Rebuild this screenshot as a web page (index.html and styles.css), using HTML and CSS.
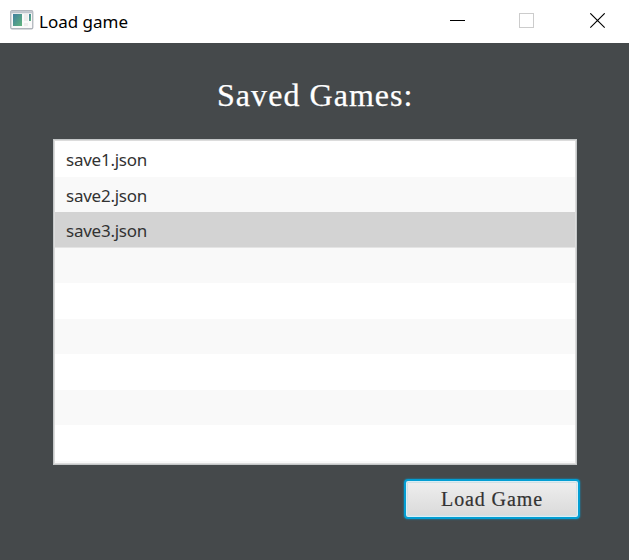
FILE: index.html
```html
<!DOCTYPE html>
<html lang="en">
<head>
<meta charset="utf-8">
<title>Load game</title>
<link rel="stylesheet" href="styles.css">
</head>
<body>
<div class="window">
  <header class="titlebar">
    <svg class="app-icon" width="24" height="20" viewBox="0 0 24 20">
      <defs><linearGradient id="pane" x1="0" y1="0" x2="1" y2="1"><stop offset="0" stop-color="#3f7fa0"/><stop offset="1" stop-color="#62b57d"/></linearGradient></defs>
      <rect x=".75" y=".75" width="22" height="18" rx="1.2" fill="#fafafa" stroke="#b0b5bc" stroke-width="1.3"/>
      <path d="M1 2.3H22.5" stroke="#bfc5cd" stroke-width="2"/>
      <rect x="3" y="4" width="9" height="12" fill="url(#pane)"/>
      <path d="M14 4h4v7h-4zM14 13h4v3h-4z" fill="#ededed"/>
      <rect x="19" y="4" width="2" height="7" fill="url(#pane)"/>
    </svg>
    <h1 class="caption">Load game</h1>
    <svg class="controls" width="156" height="16" viewBox="0 0 156 16">
      <path d="M0 7.5H15" stroke="#000"/>
      <rect x="69.5" y=".5" width="14" height="14" fill="none" stroke="#ccc"/>
      <path d="M140.3.3l14.4 14.4M154.7.3L140.3 14.7" stroke="#000" stroke-width="1.1"/>
    </svg>
  </header>
  <main class="content">
    <h2 class="heading">Saved Games:</h2>
    <ul class="list">
      <li>save1.json</li>
      <li>save2.json</li>
      <li class="selected">save3.json</li>
      <li></li><li></li><li></li><li></li><li></li><li></li><li></li>
    </ul>
    <button class="load" type="button">Load Game</button>
  </main>
</div>
</body>
</html>
```
FILE: styles.css
```css
* { box-sizing: border-box; }
body { margin: 0; background: #45494b; }
.window { width: 629px; height: 560px; overflow: hidden; display: flex; flex-direction: column; }
.titlebar {
  height: 43px; flex: none; display: flex; align-items: flex-start;
  background: #fff; padding: 0 23px 0 10px;
}
.app-icon { margin-top: 10px; }
.caption {
  margin: 9px 0 0 5px; font: 400 17px/26px "Noto Sans", sans-serif;
  letter-spacing: 0; color: #000;
}
.controls { margin: 13px 0 0 auto; }
.content {
  flex: 1; display: flex; flex-direction: column; background: #45494b;
  padding: 32px 49px 0 53px;
}
.heading {
  margin: 0 0 24px; height: 40px; padding-left: 164px; color: #fff;
  font: 400 32px/40px "Liberation Serif", serif; letter-spacing: 1.05px; white-space: nowrap;
  -webkit-text-stroke: .25px #fff;
}
.list {
  list-style: none; margin: 0; padding: 0; width: 524px; height: 326px; overflow: hidden;
  background: #fff; border: 1px solid #c4c7c8; box-shadow: inset 0 0 0 1px #dcdcdc;
  padding: 1px;
}
.list li {
  height: 35.5px; padding-left: 11px; color: #323232;
  font: 400 17px/38px "Noto Sans", sans-serif; letter-spacing: -.25px;
}
.list li:nth-child(even) { background: #f9f9f9; }
.list li:last-child { height: 2.5px; }
.list .selected { background: #d3d3d3; box-shadow: inset 0 -1px #e4e4e4; }
.load {
  align-self: flex-end; width: 176px; height: 40px; margin-top: 14px; padding: 0;
  border: 2px solid #039ed3; border-radius: 4px; color: #333;
  background: linear-gradient(#efefef, #d9d9d9);
  box-shadow: 0 0 2px #039ed3, inset 0 0 0 1px #d9eef5, inset 0 0 0 2px #d2e0e5;
  font: 400 20px/36px "Liberation Serif", serif; letter-spacing: .9px;
  -webkit-text-stroke: .2px #333;
}
```
